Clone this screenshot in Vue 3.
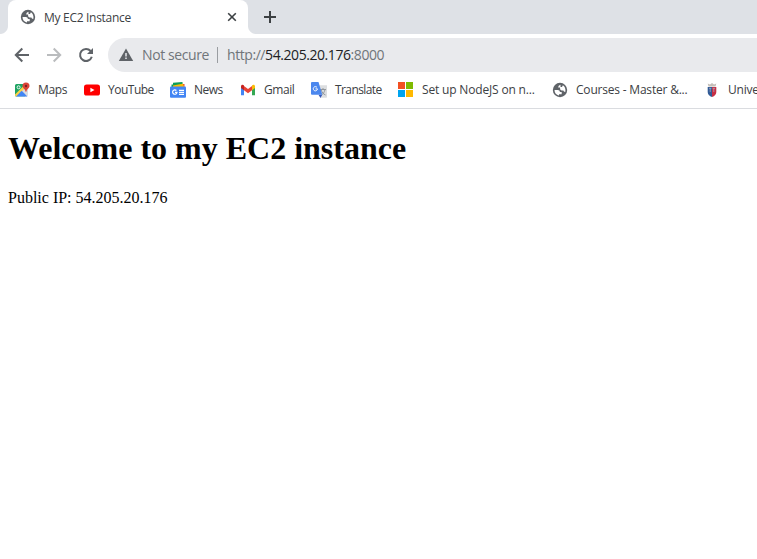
<script setup>
const globeLand = 'M2.500 8h3.200c1.500 0 2.200.8 2.200 2h1.800v2.200H7v1.200C4.300 13.100 2.500 10.800 2.500 8zM8.500 2.700C7 3.200 6.200 4.100 6.200 5.600h1.900v1.700c.5 1 1.500 1.300 2.700 1.200.7 0 1 .6 1.200 1.200h1.400c.5-2.900-.8-5.400-2.500-6.500L10 5H8.500z'

const bookmarks = [
  { id: 'maps', label: 'Maps', width: 30, spacing: -0.35 },
  { id: 'youtube', label: 'YouTube', width: 46, spacing: -0.5 },
  { id: 'news', label: 'News', width: 30, spacing: -0.5 },
  { id: 'gmail', label: 'Gmail', width: 31, spacing: -0.45 },
  { id: 'translate', label: 'Translate', width: 47, spacing: -0.6 },
  { id: 'microsoft', label: 'Set up NodeJS on n...', width: 114, spacing: -0.17 },
  { id: 'globe', label: 'Courses - Master &...', width: 112, spacing: -0.2 },
  { id: 'crest', label: 'University', width: 60, spacing: -0.2 },
]
</script>

<template>
  <div class="browser">
    <header class="tabstrip">
      <div class="edge left"></div>
      <div class="tab">
        <svg class="icon" viewBox="0 0 16 16"><circle cx="8" cy="8" r="7.200" fill="#5f6368" /><path :d="globeLand" fill="#fff" /></svg>
        <span class="title">My EC2 Instance</span>
        <svg class="close" viewBox="0 0 16 16"><path d="M4.200 4.200l7.600 7.600M11.800 4.200l-7.600 7.600" stroke="#3c4043" stroke-width="1.600" /></svg>
      </div>
      <div class="edge right"></div>
      <svg class="plus" viewBox="0 0 16 16"><path d="M8 2v12M2 8h12" stroke="#3c4043" stroke-width="2" /></svg>
    </header>

    <nav class="toolbar">
      <svg class="nav" viewBox="0 0 16 16"><path d="M15 8H2M8.300 1.500L1.800 8l6.500 6.500" fill="none" stroke="#5f6368" stroke-width="2" /></svg>
      <svg class="nav" viewBox="0 0 16 16"><path d="M1 8h13M7.700 1.500L14.200 8l-6.500 6.500" fill="none" stroke="#babcbe" stroke-width="2" /></svg>
      <svg class="nav" viewBox="0 0 16 16">
        <path d="M12.600 4A6 6 0 1 0 13.800 9.800" fill="none" stroke="#5f6368" stroke-width="2" />
        <path d="M15 1v6H9z" fill="#5f6368" />
      </svg>
      <div class="omnibox">
        <svg class="warn" viewBox="0 0 16 16">
          <path d="M8 1.500L15.200 14H.8z" fill="#5f6368" />
          <path d="M8 6v3.500M8 10.600v1.500" stroke="#e9eaed" stroke-width="1.500" />
        </svg>
        <span class="security">Not secure</span>
        <i class="divider"></i>
        <span class="url">http://<b>54.205.20.176</b>:8000</span>
      </div>
    </nav>

    <div class="bookmarks">
      <div v-for="b in bookmarks" :key="b.id" class="bookmark">
        <svg class="icon" viewBox="0 0 16 16">
          <template v-if="b.id === 'maps'">
            <path d="M2.500 2H11v12.500H2.500A1.500 1.500 0 0 1 1 13V3.500A1.500 1.500 0 0 1 2.500 2z" fill="#1fa463" />
            <path d="M1.500 14L11 4.500l3 3V13a1.500 1.500 0 0 1-1.500 1.500H2.500z" fill="#dadce0" />
            <path d="M1 12.500L10 3.500l1.800 1.800L2.500 14.500A1.500 1.500 0 0 1 1 13z" fill="#fdd247" />
            <path d="M2 14.500L7.700 8.800l5.700 5.700z" fill="#4285f4" />
            <circle cx="4.600" cy="5.300" r="1.500" fill="none" stroke="#fff" stroke-width=".9" />
            <path d="M12 .5a3.500 3.500 0 0 1 3.500 3.600C15.500 6.300 12.800 7 12.200 10h-.4C11.200 7 8.500 6.300 8.500 4.100A3.500 3.500 0 0 1 12 .5z" fill="#db4437" />
            <circle cx="12" cy="4" r="1.200" fill="#7b231e" />
          </template>
          <template v-else-if="b.id === 'youtube'">
            <rect x="0" y="2.500" width="16" height="11" rx="2.600" fill="#f00" />
            <path d="M6.400 5.700v4.600l4.100-2.300z" fill="#fff" />
          </template>
          <template v-else-if="b.id === 'news'">
            <path d="M1.500 2.500h4V5h-4z" fill="#0c9d58" />
            <path d="M12 2h2.500v3H12z" fill="#ea4335" />
            <path d="M3 2.300l10-.8 1 3.500H3z" fill="#fbbc04" />
            <path d="M3 .8L12.500 0v1.700L3 3.400z" fill="#0c9d58" />
            <rect x="0" y="4.500" width="16" height="11.300" rx="1" fill="#4285f4" />
            <path d="M6.400 8.500a2.200 2.200 0 1 0 .6 1.800H5M9 8.300h5M9 10.300h5M9 12.300h5" fill="none" stroke="#fff" stroke-width="1.200" />
          </template>
          <template v-else-if="b.id === 'gmail'">
            <path d="M1 4v9.200h3V7z" fill="#4285f4" />
            <path d="M15 4v9.200h-3V7z" fill="#34a853" />
            <path d="M4 4l4 3 4-3v4.200l-4 3-4-3z" fill="#ea4335" />
            <path d="M1 4.300C1 2.500 3 2.200 4 3.500v4.700L1 6z" fill="#c5221f" />
            <path d="M15 4.300C15 2.500 13 2.200 12 3.500v4.700L15 6z" fill="#fbbc04" />
          </template>
          <template v-else-if="b.id === 'translate'">
            <path d="M6 3.200h10V15a.8.8 0 0 1-.8.800H9.500z" fill="#dcdee0" />
            <path d="M9 7.500h6M12 6v1.500M10.200 8c.7 2.300 2 4 4.300 5M13.900 8c-.6 2.300-1.700 3.800-3.300 5" fill="none" stroke="#8a9095" stroke-width=".9" />
            <path d="M7.500 12.800h3.700L9.500 16z" fill="#3757b6" />
            <path d="M1 0h6.500l3.800 12.800H1a1 1 0 0 1-1-1V1a1 1 0 0 1 1-1z" fill="#4b87ee" />
            <path d="M6 5.400a2.100 2.100 0 1 0 .5 1.500H4.500" fill="none" stroke="#fff" stroke-width="1" />
          </template>
          <template v-else-if="b.id === 'microsoft'">
            <path d="M0 0h7v7H0z" fill="#f25022" />
            <path d="M8 0h7v7H8z" fill="#7fba00" />
            <path d="M0 8h7v7H0z" fill="#00a4ef" />
            <path d="M8 8h7v7H8z" fill="#ffb900" />
          </template>
          <template v-else-if="b.id === 'globe'">
            <circle cx="8" cy="8" r="7.200" fill="#5f6368" />
            <path :d="globeLand" fill="#fff" />
          </template>
          <template v-else>
            <path d="M3.700 1.500l2.300 1 2-1.500 2 1.500 2.300-1-.8 3H4.500z" fill="#c4bfb9" />
            <path d="M3.700 5H8v10c-2.700-1-4.300-2.500-4.300-5z" fill="#315b96" />
            <path d="M8 5h4.300v5c0 2.500-1.600 4-4.300 5z" fill="#c62f45" />
            <path d="M5 6.300h2.300M8.700 6.300H11M6.200 6.300V10M9.800 6.300V10" stroke="#a9a4bb" stroke-width=".8" />
          </template>
        </svg>
        <span class="label" :style="{ width: b.width + 'px', letterSpacing: b.spacing + 'px' }">{{ b.label }}</span>
      </div>
    </div>

    <main class="page">
      <h1>Welcome to my EC2 instance</h1>
      <p>Public IP: 54.205.20.176</p>
    </main>
  </div>
</template>

<style>
body { margin: 0; background: #fff; overflow: hidden; }
</style>

<style scoped>
.browser { width: 757px; height: 559px; overflow: hidden; background: #fff; font-family: "Open Sans", "Noto Sans", sans-serif; }
svg { display: block; flex: none; }
.tabstrip { display: flex; height: 34px; background: #dee1e6; }
.edge { flex: none; width: 8px; height: 34px; }
.edge.left { background: radial-gradient(circle at 0 0, #dee1e6 7.500px, #fff 8.500px) 0 26px / 8px 8px no-repeat; }
.edge.right { background: radial-gradient(circle at 100% 0, #dee1e6 7.500px, #fff 8.500px) 0 26px / 8px 8px no-repeat; }
.tab { display: flex; align-items: center; box-sizing: border-box; width: 240px; height: 34px; padding: 0 8px 0 12px; background: #fff; border-radius: 8px 8px 0 0; }
.icon { width: 16px; height: 16px; }
.title { flex: 1; margin-left: 8px; font-size: 12px; letter-spacing: -.3px; color: #3c4043; white-space: nowrap; }
.close { width: 16px; height: 16px; }
.plus { width: 16px; height: 16px; margin: 9px 0 0 6px; }
.toolbar { display: flex; align-items: center; height: 42px; padding-left: 14px; gap: 16px; }
.nav { width: 16px; height: 16px; }
.omnibox { display: flex; flex: 1; align-items: center; height: 34px; margin-left: -2px; padding-left: 10px; border-radius: 17px 0 0 17px; background: #e9eaed; font-size: 14px; color: #70757a; white-space: nowrap; }
.warn { width: 16px; height: 16px; }
.security, .url { padding-bottom: 1px; }
.security { width: 67px; margin-left: 8px; letter-spacing: -.4px; }
.divider { width: 1px; height: 16px; margin: 0 9px 0 8px; background: #9a9da1; }
.url { letter-spacing: -.43px; }
.url b { font-weight: 400; color: #202124; }
.bookmarks { display: flex; align-items: center; gap: 16px; box-sizing: border-box; height: 33px; padding: 0 0 4px 14px; border-bottom: 1px solid #dadce0; }
.bookmark { display: flex; flex: none; align-items: center; gap: 8px; }
.label { font-size: 12px; line-height: 16px; color: #3c4043; white-space: nowrap; }
.page { padding: 0 8px; font-family: "Liberation Serif", serif; color: #000; display: flow-root; }
h1 { margin: 21.440px 0; font-size: 32px; font-weight: 700; }
p { margin: 16px 0; font-size: 16px; }
</style>
